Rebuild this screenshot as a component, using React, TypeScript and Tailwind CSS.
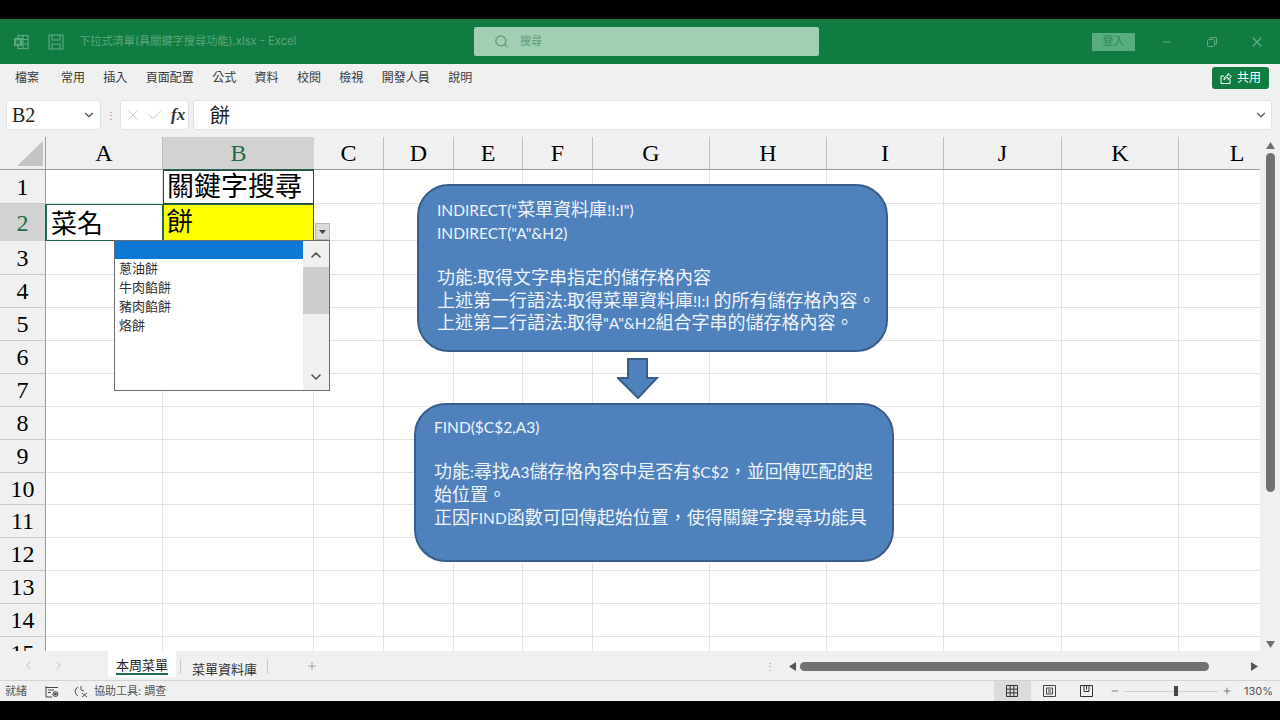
import { Check, ChevronDown, ChevronLeft, ChevronRight, ChevronUp, Minus, Plus, Search, X } from 'lucide-react';

const CJK_SANS = "font-['Inter','Noto_Sans_CJK_TC',sans-serif]";
const SHEET_FONT = "font-['Liberation_Serif','Noto_Sans_CJK_TC',serif]";
const SHAPE_FONT = "font-['Lato','Noto_Sans_CJK_TC',sans-serif]";

const menus = ['常用', '插入', '頁面配置', '公式', '資料', '校閱', '檢視', '開發人員', '說明'];
const columns = ['A', 'B', 'C', 'D', 'E', 'F', 'G', 'H', 'I', 'J', 'K', 'L'];
const rows = Array.from({ length: 15 }, (_, i) => i + 1);
const dropdownItems = ['蔥油餅', '牛肉餡餅', '豬肉餡餅', '烙餅'];

const ExcelIcon = () => (
  <svg width="18" height="18" viewBox="0 0 18 18" fill="none" stroke="#5fa981" strokeWidth="1.2">
    <rect x="6" y="2.5" width="10" height="13" />
    <path d="M6 6.5h10M6 11h10M11 2.5v13" />
    <rect x="2" y="5" width="8" height="8" fill="#5fa981" stroke="none" />
    <path d="M4 7l4 4M8 7l-4 4" stroke="#107c41" />
  </svg>
);

const SaveIcon = () => (
  <svg width="16" height="16" viewBox="0 0 16 16" fill="none" stroke="#5fa981" strokeWidth="1.1">
    <path d="M1 1h14v14H1z" />
    <path d="M4 1v5h8V1M4 15v-5h8v5" />
  </svg>
);

const ShareIcon = () => (
  <svg width="12" height="12" viewBox="0 0 12 12" fill="none" stroke="white" strokeWidth="1">
    <path d="M4 4H1v7.5h9V7" />
    <path d="M4 8c0-3 2-4.500 4-4.500V1.500l3.500 3L8 7.500V5.500C6 5.500 5 6.500 4 8z" />
  </svg>
);

// Calibri latin sits smaller than the CJK text next to it in the shapes
const ShapeLine = ({ text }: { text: string }) => (
  <div className="h-[22.700px]">
    {text.split(/([\u0000-\u00ff]+)/).map((part, i) =>
      /^[\u0000-\u00ff]+$/.test(part) ? (
        <span key={i} className="text-[15.500px]">{part}</span>
      ) : (
        <span key={i}>{part}</span>
      )
    )}
  </div>
);

const cellClass = (col: string, row: number) => {
  if (col === 'B' && row === 1) return 'border border-[#2b4a3a] text-[27px] leading-[32px] pl-[3px]';
  if (col === 'A' && row === 2) return 'border border-[#21694a] text-[26px] leading-[40px] pl-[4px]';
  if (col === 'B' && row === 2) return 'border border-[#21694a] bg-[#ffff00] text-[26px] leading-[36px] pl-[3px]';
  return 'border-r border-b border-[#e2e2e2]';
};

const cellText = (col: string, row: number) => {
  if (col === 'B' && row === 1) return '關鍵字搜尋';
  if (col === 'A' && row === 2) return '菜名';
  if (col === 'B' && row === 2) return '餅';
  return '';
};

const Sheet = () => (
  <div className="relative flex-1 min-h-0 overflow-hidden flex bg-white">
    <div className="w-[1260px] shrink-0 overflow-hidden">
      <div className={`w-[1296px] grid grid-cols-[46px_117px_151px_70px_70px_69px_70px_117px_117px_117px_118px_117px_117px] grid-rows-[33px_34px_37px_34px_repeat(6,33px)_32px_repeat(5,33px)] ${SHEET_FONT} text-black`}>
        <div className="bg-[#f0f0f0] border-r border-b border-[#9c9c9c] flex items-end justify-end pr-[2px] pb-[3px]">
          <svg width="26" height="25" viewBox="0 0 26 25"><path d="M26 0v25H0z" fill="#c4c4c4" /></svg>
        </div>
        {columns.map((c) => (
          <div
            key={c}
            className={
              c === 'B'
                ? 'bg-[#d2d2d2] border-b border-[#21694a] flex items-center justify-center text-[24px] text-[#1f6b48]'
                : 'bg-[#f0f0f0] border-r border-b border-r-[#c0c0c0] border-b-[#9c9c9c] flex items-center justify-center text-[24px]'
            }
          >
            {c}
          </div>
        ))}
        {rows.map((r) => (
          <div key={r} className="contents">
            <div
              className={
                r === 2
                  ? 'bg-[#d2d2d2] border-r border-[#21694a] flex items-center justify-center text-[24px] text-[#1f6b48]'
                  : 'bg-[#f0f0f0] border-r border-b border-r-[#9c9c9c] border-b-[#c8c8c8] flex items-center justify-center text-[24px]'
              }
            >
              {r}
            </div>
            {columns.map((c) => (
              <div key={c} className={`overflow-hidden whitespace-nowrap ${cellClass(c, r)}`}>
                {cellText(c, r)}
              </div>
            ))}
          </div>
        ))}
      </div>
    </div>

    <div className="w-[20px] bg-[#f0f0f0] flex flex-col items-center pt-[5px] pb-[3px]">
      <svg width="9" height="7" viewBox="0 0 9 7"><path d="M4.500 0L9 7H0z" fill="#717171" /></svg>
      <div className="mt-[4px] w-[9px] h-[339px] rounded-full bg-[#717171]" />
      <div className="flex-1" />
      <svg width="9" height="7" viewBox="0 0 9 7"><path d="M4.500 7L9 0H0z" fill="#717171" /></svg>
    </div>

    {/* filter dropdown opened over B3 */}
    <div className="absolute left-[315px] top-[86px] w-[15px] h-[17px] bg-[#dcdcdc] border border-[#b5b5b5] flex items-center justify-center">
      <svg width="7" height="4" viewBox="0 0 7 4"><path d="M0 0h7L3.500 4z" fill="#444" /></svg>
    </div>
    <div className={`absolute left-[114px] top-[103px] w-[216px] h-[151px] bg-white border border-[#6e6e6e] flex ${CJK_SANS}`}>
      <div className="flex-1 min-w-0">
        <div className="h-[18px] bg-[#0a78d4]" />
        <div className="pl-[4px] text-[13px] leading-[19px] text-[#333]">
          {dropdownItems.map((item) => (
            <div key={item}>{item}</div>
          ))}
        </div>
      </div>
      <div className="w-[26px] bg-[#f0f0f0] flex flex-col items-center">
        <ChevronUp size={16} strokeWidth={2.5} className="mt-[6px] text-[#555]" />
        <div className="mt-[4px] w-full h-[47px] bg-[#cdcdcd]" />
        <div className="flex-1" />
        <ChevronDown size={16} strokeWidth={2.5} className="mb-[5px] text-[#555]" />
      </div>
    </div>

    {/* floating shapes */}
    <div className={`absolute left-[417px] top-[47px] w-[471px] h-[168px] rounded-[32px] bg-[#4f81bd] border-2 border-[#385d8a] pl-[18px] pt-[12px] text-[18px] leading-[22.700px] text-[#eef3f9] whitespace-nowrap ${SHAPE_FONT}`}>
      <ShapeLine text={'INDIRECT("菜單資料庫!I:I")'} />
      <ShapeLine text={'INDIRECT("A"&H2)'} />
      <div className="h-[22.700px]" />
      <ShapeLine text="功能:取得文字串指定的儲存格內容" />
      <ShapeLine text="上述第一行語法:取得菜單資料庫!I:I 的所有儲存格內容。" />
      <ShapeLine text={'上述第二行語法:取得"A"&H2組合字串的儲存格內容。'} />
    </div>
    <svg className="absolute left-[617px] top-[221px]" width="42" height="41" viewBox="0 0 42 41">
      <path d="M11 1h19v19h10L21 40 1 20h10z" fill="#4f81bd" stroke="#385d8a" strokeWidth="2" />
    </svg>
    <div className={`absolute left-[414px] top-[266px] w-[480px] h-[159px] rounded-[32px] bg-[#4f81bd] border-2 border-[#385d8a] pl-[18px] pt-[10px] text-[18px] leading-[22.700px] text-[#eef3f9] whitespace-nowrap ${SHAPE_FONT}`}>
      <ShapeLine text="FIND($C$2,A3)" />
      <div className="h-[22.700px]" />
      <ShapeLine text="功能:尋找A3儲存格內容中是否有$C$2，並回傳匹配的起" />
      <ShapeLine text="始位置。" />
      <ShapeLine text="正因FIND函數可回傳起始位置，使得關鍵字搜尋功能具" />
    </div>
  </div>
);

export default function App() {
  return (
    <div className={`w-[1280px] h-[720px] bg-black py-[19px] overflow-hidden ${CJK_SANS}`}>
      <div className="h-[682px] flex flex-col bg-[#f0f0f0]">
        {/* title bar */}
        <div className="h-[45px] bg-[#107c41] flex items-center relative shrink-0">
          <div className="ml-[12px] w-[18px]"><ExcelIcon /></div>
          <div className="ml-[18px] w-[16px]"><SaveIcon /></div>
          <span className="ml-[15px] text-[11.200px] text-[#5aa67c] whitespace-nowrap">下拉式清單(具關鍵字搜尋功能).xlsx  -  Excel</span>
          <div className="absolute left-[474px] top-[8px] w-[345px] h-[29px] rounded-[2px] bg-[#a0cfb3] flex items-center pl-[20px] gap-[11px] text-[#5d9b78] text-[11px]">
            <Search size={15} />
            <span>搜尋</span>
          </div>
          <div className="ml-auto flex items-center text-[#5fa981]">
            <div className="w-[43px] h-[18px] bg-[#58ad7e] text-[#2b8a58] text-[11px] flex items-center justify-center">登入</div>
            <Minus size={12} className="ml-[26px]" />
            <svg className="ml-[34px]" width="10" height="10" viewBox="0 0 10 10" fill="none" stroke="currentColor">
              <rect x="0.500" y="2.500" width="7" height="7" rx="1" />
              <path d="M3 2.500V.5h6.500V7H7.500" />
            </svg>
            <X size={16} className="ml-[32px] mr-[15px]" />
          </div>
        </div>

        {/* ribbon tabs */}
        <div className="h-[28px] flex items-center shrink-0 pl-[15px] pr-[11px] gap-[18.400px] text-[12px] text-[#3a3a3a]">
          <span className="mr-[3.500px] whitespace-nowrap">檔案</span>
          {menus.map((m) => (
            <span key={m} className="whitespace-nowrap">{m}</span>
          ))}
          <button className="ml-auto w-[57px] h-[22px] rounded-[3px] bg-[#107c41] text-white flex items-center justify-center gap-[5px] text-[12px]">
            <ShareIcon />
            共用
          </button>
        </div>

        {/* formula bar */}
        <div className="h-[45px] flex items-start shrink-0 pt-[8px] pl-[6px] pr-[8px]">
          <div className={`w-[95px] h-[30px] bg-white rounded-[3px] border border-[#e2e2e2] flex items-center pl-[5px] pr-[4px] text-[20px] text-[#222] ${SHEET_FONT}`}>
            <span className="flex-1">B2</span>
            <ChevronDown size={14} className="text-[#555]" />
          </div>
          <div className="w-[19px] h-[30px] flex items-center justify-center text-[#888] text-[10px]">⋮</div>
          <div className="w-[69px] h-[30px] bg-white rounded-[3px] border border-[#e2e2e2] flex items-center pl-[3px] gap-[4px] text-[#bdbdbd]">
            <X size={18} strokeWidth={1.1} />
            <Check size={18} strokeWidth={1.1} />
            <span className={`ml-[3px] text-[17px] font-bold italic text-[#333] ${SHEET_FONT}`}>fx</span>
          </div>
          <div className="ml-[4px] flex-1 h-[30px] bg-white rounded-[3px] border border-[#e2e2e2] flex items-center pl-[16px] pr-[3px] text-[20px] text-[#222]">
            <span className="flex-1 pt-[1px]">餅</span>
            <ChevronDown size={14} className="text-[#555]" />
          </div>
        </div>

        <Sheet />

        {/* sheet tabs */}
        <div className="h-[30px] flex items-start shrink-0 border-b border-[#d4d4d4] text-[#333] relative">
          <ChevronLeft size={13} strokeWidth={1.2} className="ml-[22px] mt-[8px] text-[#a0a0a0]" />
          <ChevronRight size={13} strokeWidth={1.2} className="ml-[17px] mt-[8px] text-[#a0a0a0]" />
          <div className="ml-[43px] w-[68px] h-[26px] bg-white rounded-b-[3px] flex flex-col items-center pt-[6px] text-[13px] text-[#1d1d1d]">
            <span className="border-b-2 border-[#21694a] leading-[16px]">本周菜單</span>
          </div>
          <div className="ml-[4px] mt-[8px] w-px h-[15px] bg-[#c8c8c8]" />
          <span className="ml-[11px] mt-[10px] text-[13px] leading-[16px] whitespace-nowrap">菜單資料庫</span>
          <div className="ml-[10px] mt-[8px] w-px h-[15px] bg-[#c8c8c8]" />
          <Plus size={12} strokeWidth={1.2} className="ml-[38px] mt-[9px] text-[#777]" />
          <span className="absolute left-[765px] top-[8px] text-[10px] leading-[14px] text-[#999]">⋮</span>
          <svg className="absolute left-[789px] top-[11px]" width="7" height="9" viewBox="0 0 7 9"><path d="M0 4.500L7 0v9z" fill="#555" /></svg>
          <div className="absolute left-[800px] top-[11px] w-[409px] h-[9px] rounded-full bg-[#717171]" />
          <svg className="absolute left-[1251px] top-[11px]" width="7" height="9" viewBox="0 0 7 9"><path d="M7 4.500L0 0v9z" fill="#555" /></svg>
        </div>

        {/* status bar */}
        <div className="h-[20px] flex items-center shrink-0 text-[11px] text-[#555] relative">
          <span className="ml-[5px]">就緒</span>
          <svg className="ml-[18px]" width="14" height="13" viewBox="0 0 14 13" fill="none" stroke="#444">
            <path d="M1 2.500h12M1 1v11h6M3 5h6M3 7.500h3" />
            <circle cx="10.500" cy="9" r="2.500" />
            <circle cx="10.500" cy="9" r="1" fill="#444" />
          </svg>
          <svg className="ml-[15px]" width="15" height="13" viewBox="0 0 15 13" fill="none" stroke="#555">
            <path d="M4 2a5 5 0 0 0 0 9M7 1v4l3 1M8 8l5 4M13 8l-5 4" />
          </svg>
          <span className="ml-[5px] whitespace-nowrap">協助工具: 調查</span>
          <div className="ml-auto flex items-center h-full">
            <div className="w-[37px] h-full bg-[#dcdcdc] flex items-center justify-center">
              <svg width="12" height="12" viewBox="0 0 12 12" fill="none" stroke="#333">
                <path d="M.5.500h11v11H.5zM.5 4.170h11M.5 7.830h11M4.170.5v11M7.830.5v11" />
              </svg>
            </div>
            <div className="w-[37px] flex items-center justify-center">
              <svg width="13" height="12" viewBox="0 0 13 12" fill="none" stroke="#444">
                <path d="M.5.500h12v11H.5zM3.500 3h6v6h-6zM5 5h3M5 7h3" />
              </svg>
            </div>
            <div className="w-[37px] flex items-center justify-center">
              <svg width="13" height="12" viewBox="0 0 13 12" fill="none" stroke="#333">
                <path d="M.5.500h12v11H.5zM4 .5v6h5v-6M6.500.5v4" />
              </svg>
            </div>
            <Minus size={10} className="ml-[5px] text-[#666]" />
            <div className="relative ml-[4px] w-[94px] h-px bg-[#cfcfcf]">
              <div className="absolute left-[50px] top-[-5px] w-[4px] h-[10px] bg-[#444]" />
            </div>
            <Plus size={10} className="ml-[4px] text-[#666]" />
            <span className="ml-[12px] mr-[7px] text-[#555]">130%</span>
          </div>
        </div>
      </div>
    </div>
  );
}
